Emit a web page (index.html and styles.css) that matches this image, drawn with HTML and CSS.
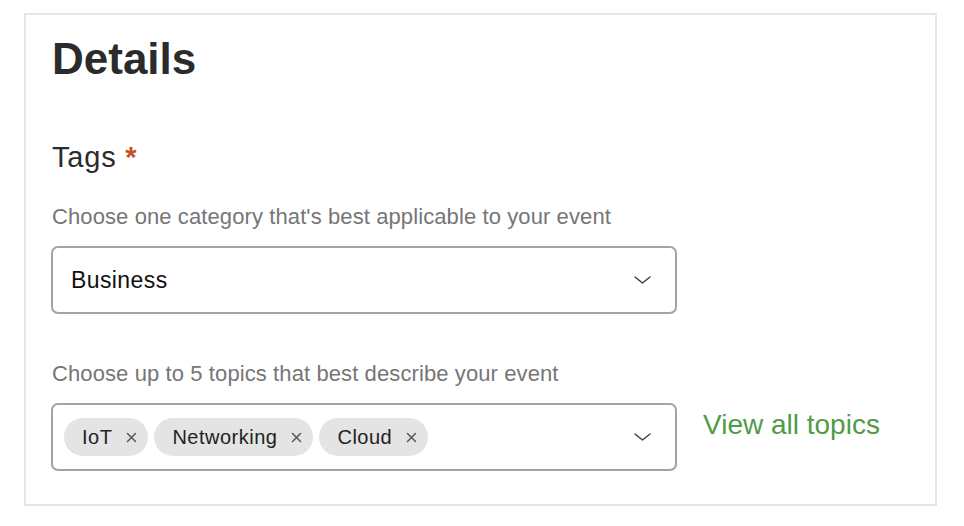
FILE: index.html
```html
<!DOCTYPE html>
<html lang="en">
<head>
<meta charset="utf-8">
<title>Details</title>
<link rel="stylesheet" href="styles.css">
</head>
<body>
<div class="page">
  <section class="card">
    <h1 class="title">Details</h1>
    <h2 class="label">Tags <span class="req">*</span></h2>
    <p class="hint">Choose one category that's best applicable to your event</p>
    <div class="select">
      <span class="select-value">Business</span>
      <svg class="chev" width="19" height="10" viewBox="0 0 19 10"><path d="M2 2 L9.5 8 L17 2" fill="none" stroke="#444" stroke-width="1.6" stroke-linecap="round" stroke-linejoin="round"/></svg>
    </div>
    <p class="hint hint-2">Choose up to 5 topics that best describe your event</p>
    <div class="row">
      <div class="select multi">
        <div class="chips">
          <span class="chip">IoT<svg class="x" width="11" height="11" viewBox="0 0 11 11"><path d="M1.5 1.5 L9.5 9.5 M9.5 1.5 L1.5 9.5" stroke="#555" stroke-width="1.5" stroke-linecap="round"/></svg></span>
          <span class="chip">Networking<svg class="x" width="11" height="11" viewBox="0 0 11 11"><path d="M1.5 1.5 L9.5 9.5 M9.5 1.5 L1.5 9.5" stroke="#555" stroke-width="1.5" stroke-linecap="round"/></svg></span>
          <span class="chip">Cloud<svg class="x" width="11" height="11" viewBox="0 0 11 11"><path d="M1.5 1.5 L9.5 9.5 M9.5 1.5 L1.5 9.5" stroke="#555" stroke-width="1.5" stroke-linecap="round"/></svg></span>
        </div>
        <svg class="chev" width="19" height="10" viewBox="0 0 19 10"><path d="M2 2 L9.5 8 L17 2" fill="none" stroke="#444" stroke-width="1.6" stroke-linecap="round" stroke-linejoin="round"/></svg>
      </div>
      <a class="link" href="#">View all topics</a>
    </div>
  </section>
</div>
</body>
</html>
```
FILE: styles.css
```css
html, body {
  margin: 0;
  padding: 0;
  background: #ffffff;
}
body {
  font-family: "Liberation Sans", Arial, sans-serif;
  color: #2b2b2b;
}
.page {
  padding: 13px 0 0 24px;
}
.card {
  box-sizing: border-box;
  width: 913px;
  height: 493px;
  border: 2px solid #e6e6e6;
  padding: 18px 26px 0 25px;
}
.title {
  margin: 0 0 0 1px;
  font-size: 44px;
  line-height: 52px;
  font-weight: 700;
  color: #2b2b2b;
}
.label {
  margin: 55px 0 0 1px;
  font-size: 29px;
  line-height: 34px;
  font-weight: 400;
  letter-spacing: 0.8px;
  color: #2b2b2b;
}
.req {
  color: #c6501e;
  font-weight: 700;
}
.hint {
  margin: 30px 0 0 1px;
  font-size: 22px;
  line-height: 26px;
  letter-spacing: 0.1px;
  color: #767676;
}
.hint-2 {
  margin-top: 47px;
}
.select {
  box-sizing: border-box;
  width: 626px;
  height: 68px;
  margin-top: 16px;
  border: 2px solid #a3a3a3;
  border-radius: 7px;
  display: flex;
  align-items: center;
  justify-content: space-between;
  padding: 0 23px 0 18px;
}
.select-value {
  font-size: 23px;
  letter-spacing: 0.4px;
  color: #111;
}
.chev {
  flex: none;
}
.row {
  display: flex;
  align-items: flex-start;
  gap: 26px;
}
.multi {
  padding-left: 11px;
}
.chips {
  display: flex;
  gap: 6px;
}
.chip {
  display: inline-flex;
  align-items: center;
  gap: 14px;
  height: 38px;
  padding: 0 11px 0 18px;
  border-radius: 19px;
  background: #e4e4e4;
  font-size: 20px;
  letter-spacing: 0.5px;
  color: #222;
}
.link {
  margin-top: 21px;
  font-size: 28px;
  line-height: 34px;
  color: #519b47;
  text-decoration: none;
}
```
